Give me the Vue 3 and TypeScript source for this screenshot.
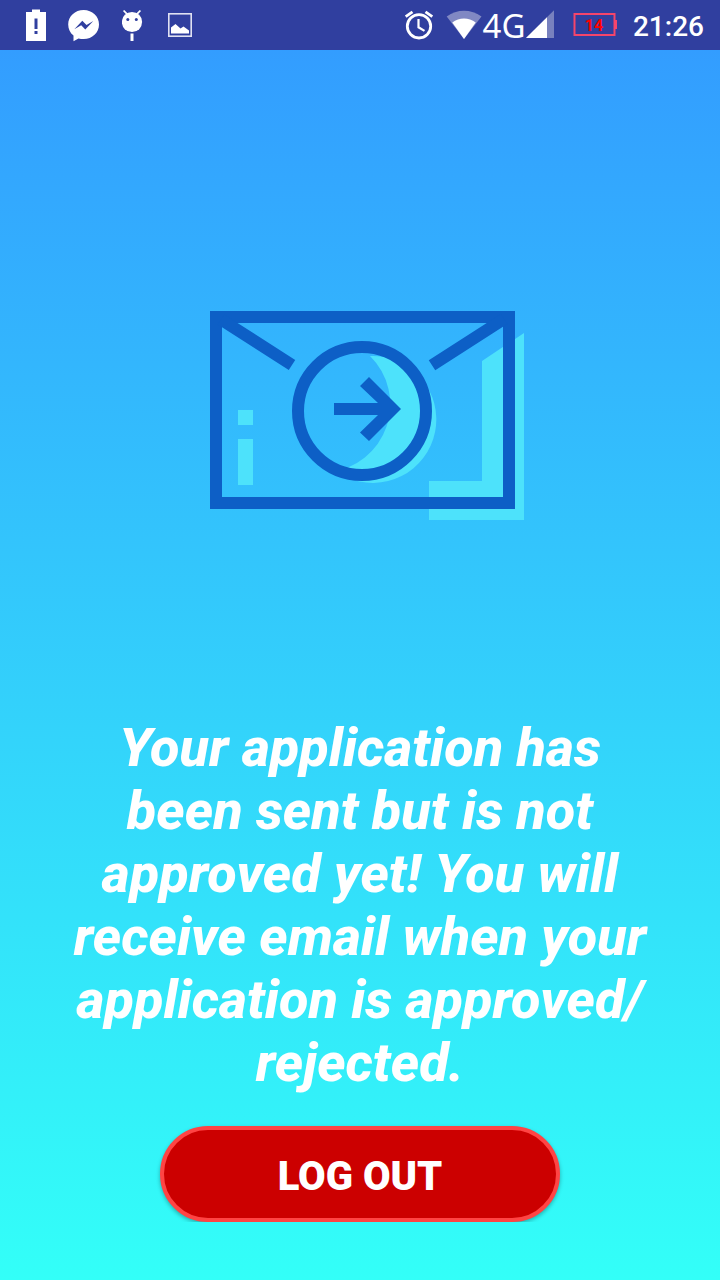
<script setup lang="ts">
import { ref } from 'vue'

const time = ref<string>('21:26')
const battery = ref<number>(14)
const loggedOut = ref<boolean>(false)

function logOut(): void {
  loggedOut.value = true
}
</script>

<template>
  <div class="screen">
    <header class="status">
      <div class="notices">
        <svg width="20" height="50" viewBox="26 0 20 50" aria-hidden="true">
          <path fill="#fff" fill-rule="evenodd" d="M32 9.500h8V12h6v29H26V12h6zM34.500 18.500v10.500h3v-10.500zM34.500 31v3h3v-3z" />
        </svg>
        <svg width="32" height="50" viewBox="68 0 32 50" aria-hidden="true">
          <path fill="#fff" d="M83.700 10C75 10 68.200 16.400 68.200 24.400c0 4.600 2 8.600 5.300 11.200v5.700l5-2.900c1.600.5 3.400.7 5.200.7 8.600 0 15.300-6.500 15.300-14.600S92.300 10 83.700 10z" />
          <path fill="#303f9f" d="M74.300 29.200l8-8.400 4.200 4.200 6.800-3.900-8 8.300-4.100-4.200z" />
        </svg>
        <svg width="24" height="50" viewBox="122 0 24 50" aria-hidden="true">
          <circle cx="132" cy="22" r="10.100" fill="#fff" />
          <path d="M123.600 10.500l4 4.200M140.400 10.500l-4 4.200" stroke="#fff" stroke-width="1.800" />
          <circle cx="127.800" cy="19.500" r="1.500" fill="#303f9f" />
          <circle cx="136.300" cy="19.500" r="1.500" fill="#303f9f" />
          <path d="M130.500 33.500h3V41h-3z" fill="#fff" />
        </svg>
        <svg width="24" height="50" viewBox="168 0 24 50" aria-hidden="true">
          <rect x="168.800" y="13.800" width="22.400" height="22.400" fill="none" stroke="#dfe1f2" stroke-width="1.600" />
          <path fill="#fff" d="M171 33.500v-6l4.500-3.500 5 4.500 3-2 5.500 4v3z" />
        </svg>
      </div>
      <div class="system">
        <svg width="30" height="50" viewBox="404 0 30 50" aria-hidden="true">
          <g fill="none" stroke="#fff">
            <circle cx="419" cy="26.300" r="11.700" stroke-width="2.800" />
            <path d="M418.500 19v8.300l6 3.600" stroke-width="2.200" />
            <path d="M405.700 16.600l6.800-4.800M432.300 16.600l-6.800-4.800" stroke-width="2.800" />
          </g>
        </svg>
        <div class="network">
          <svg width="36" height="50" viewBox="446 0 36 50" aria-hidden="true">
            <path fill="#8088c3" d="M446.700 16.500C457 8.800 471 8.800 481.500 16.500L464 39z" />
            <path fill="#fff" d="M452.300 22.400c7-5.200 16.400-5.200 23.400 0L464 39z" />
          </svg>
          <span class="generation">4G</span>
          <svg width="28" height="50" viewBox="526 0 28 50" aria-hidden="true">
            <path fill="#7881be" d="M554.300 10v28H526z" />
            <path fill="#fff" d="M547 17.200V38h-21z" />
          </svg>
        </div>
        <svg width="44" height="50" viewBox="573 0 44 50" role="img" :aria-label="`Battery ${battery}%`">
          <rect x="574.500" y="14" width="40" height="21" fill="none" stroke="#f5456b" stroke-width="2" />
          <path d="M614.500 20h2.500v9h-2.500z" fill="#f5456b" />
          <text class="charge" x="594" y="31" text-anchor="middle">{{ battery }}</text>
        </svg>
        <time class="clock">{{ time }}</time>
      </div>
    </header>

    <main class="content">
      <div class="picture">
        <svg class="envelope" viewBox="192 308 336 214" aria-hidden="true">
          <g fill="#4de2fb">
            <path d="M482 361l42-28v187h-95v-39h53z" />
            <path d="M238 410h15v15h-15zM238 439h15v46h-15z" />
            <path d="M370 356A68 68 0 0 1 330 472L346 477A63.500 63.500 0 1 0 370 356z" />
          </g>
          <g fill="none" stroke="#0d5fc6" stroke-width="12">
            <rect x="216" y="317" width="293" height="186" />
            <path d="M221 319.500L292 365M504 319L432 365.300" />
            <circle cx="362" cy="411" r="64" />
          </g>
          <path fill="#0d5fc6" d="M369 377l32 32-32 32-9-8.500 18-17.500h-44v-12h44l-18-17z" />
        </svg>
      </div>
      <p class="message">
        Your application has been sent but is not approved yet! You will receive email when your application is approved/<wbr>rejected.
      </p>
      <button class="logout" type="button" :disabled="loggedOut" @click="logOut">LOG OUT</button>
    </main>
  </div>
</template>

<style>
body {
  margin: 0;
}
</style>

<style scoped>
.screen {
  display: flex;
  flex-direction: column;
  min-height: 100vh;
  background: linear-gradient(#3399ff, #33fff8);
  color: #fff;
  font-family: Roboto, "Liberation Sans", sans-serif;
}

.status {
  display: flex;
  justify-content: space-between;
  height: 50px;
  padding: 0 16px 0 26px;
  background: #303f9f;
}

.status svg {
  display: block;
  flex: none;
}

.notices {
  display: flex;
  gap: 22px;
}

.system {
  display: flex;
  align-items: center;
}

.network {
  display: flex;
  align-items: center;
  margin: 0 19px 0 12px;
}

.generation {
  width: 44px;
  padding-top: 2px;
  font-family: "Noto Sans", sans-serif;
  font-size: 33px;
  line-height: 40px;
  text-align: center;
}

.charge {
  fill: #ff0000;
  font-size: 16px;
  font-weight: 700;
}

.clock {
  margin-left: 16px;
  padding-top: 4px;
  font-size: 28px;
  font-weight: 500;
  line-height: 40px;
}

.content {
  display: flex;
  flex: 1;
  flex-direction: column;
  align-items: center;
  padding: 64px 60px 58px;
}

.picture {
  display: flex;
  flex: 1;
  align-items: center;
  justify-content: center;
  width: 100%;
}

.envelope {
  width: 56%;
}

.message {
  margin: 0;
  font-size: 54px;
  font-style: italic;
  font-weight: 800;
  line-height: 63px;
  text-align: center;
}

.logout {
  width: 100%;
  max-width: 400px;
  height: 96px;
  margin-top: 32px;
  padding: 4px 0 0;
  border: 4px solid #ff4444;
  border-radius: 48px;
  background: #cc0000;
  box-shadow: 0 2px 4px rgba(0, 0, 0, 0.3);
  clip-path: inset(-8px -8px 0);
  color: #fff;
  font-family: inherit;
  font-size: 40px;
  font-weight: 900;
  cursor: pointer;
}
</style>
